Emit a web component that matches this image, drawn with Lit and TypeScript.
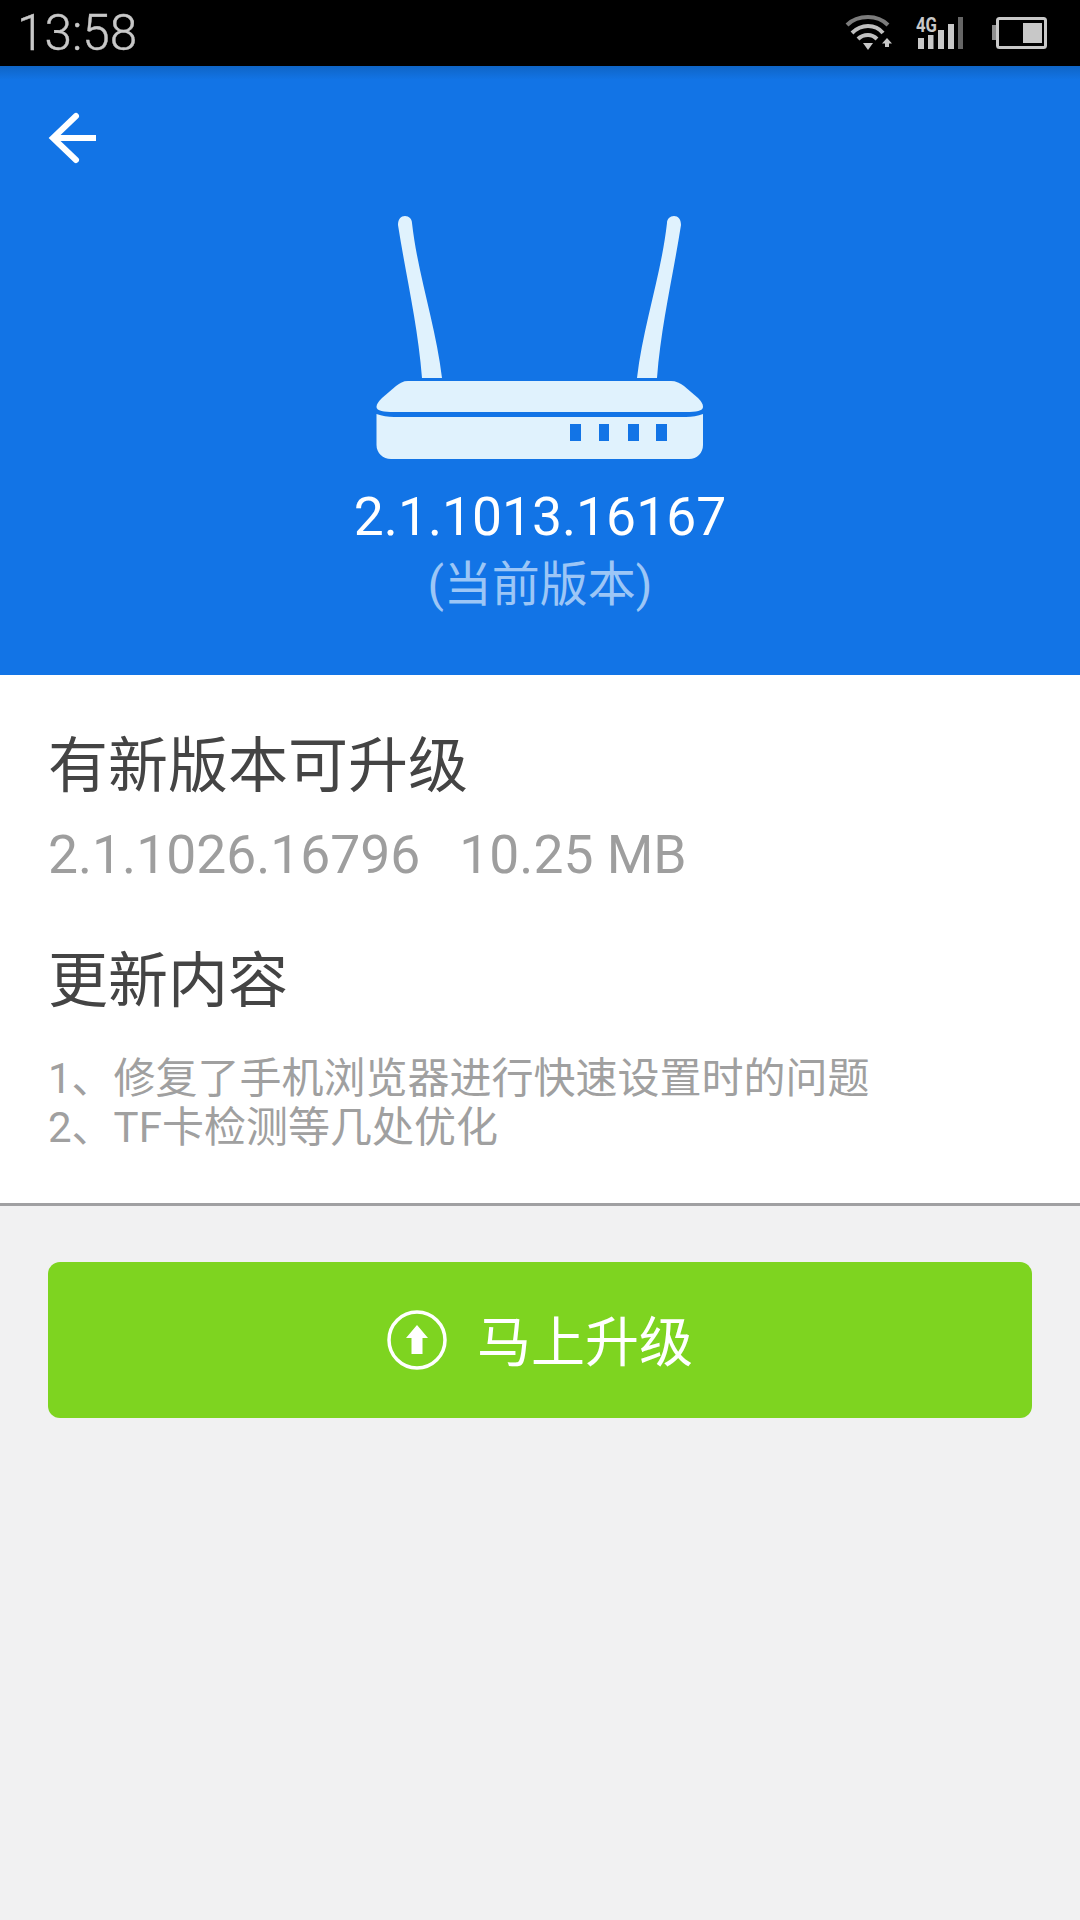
import { LitElement, html, css } from "lit";
import { customElement } from "lit/decorators.js";

@customElement("app-root")
export class AppRoot extends LitElement {
  static styles = css`
    :host {
      display: block;
      width: 1080px;
      height: 1920px;
      background: #f1f1f2;
      font-family: Roboto, "Noto Sans CJK SC", sans-serif;
      overflow: hidden;
    }
    .status {
      height: 66px;
      background: #000;
      display: flex;
      align-items: center;
      justify-content: space-between;
      padding: 0 25px 0 17px;
      box-sizing: border-box;
      color: #c8c8c8;
    }
    .time {
      font-size: 49.5px;
      font-weight: 300;
      line-height: 66px;
      -webkit-text-stroke: 0.4px #c8c8c8;
    }
    .status svg {
      display: block;
    }
    .hero {
      height: 609px;
      background: linear-gradient(#0f65c6 0, #1274e6 14px);
      display: flex;
      flex-direction: column;
      align-items: center;
      position: relative;
      box-sizing: border-box;
      padding-top: 150px;
    }
    .back {
      position: absolute;
      left: 46px;
      top: 44px;
    }
    .router {
      display: block;
    }
    .cur {
      margin-top: 26px;
      font-size: 53.4px;
      line-height: 62px;
      color: #fff;
    }
    .cur-label {
      font-size: 48px;
      line-height: 60px;
      margin-top: 7px;
      color: #9cc6f6;
    }
    .info {
      background: #fff;
      height: 531px;
      border-bottom: 3px solid #a0a0a2;
      padding: 56px 48px 0;
      box-sizing: border-box;
    }
    h2 {
      margin: 0;
      font-size: 60px;
      font-weight: 400;
      line-height: 72px;
      color: #444;
    }
    .ver {
      display: flex;
      gap: 39px;
      margin-top: 21px;
      font-size: 53.4px;
      line-height: 62px;
      color: #9e9e9e;
    }
    .changes-title {
      margin-top: 60px;
    }
    .notes {
      margin-top: 36px;
      font-size: 42px;
      line-height: 49px;
      color: #a0a0a0;
    }
    .action {
      padding: 56px 48px 0;
    }
    .btn {
      height: 156px;
      border-radius: 12px;
      background: #7ed420;
      display: flex;
      align-items: center;
      justify-content: center;
      gap: 30px;
      color: #fff;
      font-size: 54px;
    }
    .btn span {
      margin-top: -4px;
    }
  `;

  render() {
    return html`
      <div class="status">
        <span class="time">13:58</span>
        <svg width="210" height="46" viewBox="0 0 210 46">
          <g fill="none" stroke-width="4">
            <path d="M2 15 C8 9 15 7 23 7 C31 7 37 9 43 15" stroke="#7c7c7c" />
            <path d="M7 23 C12 18 17 16 23 16 C29 16 34 18 38 23" stroke="#c0c0c0" />
            <path d="M13 29 C16 26 19 25 23 25 C27 25 29 26 32 29" stroke="#c0c0c0" />
          </g>
          <path d="M18 33 H28 L23 40 Z" fill="#c8c8c8" />
          <path d="M42 28 L47 33.500 H44 V37 H40 V33.500 H37 Z" fill="#c8c8c8" />
          <text x="71" y="22" font-family="Roboto, sans-serif" font-size="20" font-weight="700" fill="#c8c8c8" textLength="21" lengthAdjust="spacingAndGlyphs">4G</text>
          <rect x="73" y="28" width="6" height="11" fill="#c8c8c8" />
          <rect x="83" y="25" width="5.500" height="14" fill="#c8c8c8" />
          <rect x="93" y="20" width="6" height="19" fill="#c8c8c8" />
          <rect x="103" y="14" width="6" height="25" fill="#c8c8c8" />
          <rect x="113" y="7" width="5" height="32" fill="#666" />
          <rect x="147" y="15" width="4" height="15" fill="#8e8e8e" />
          <rect x="152.500" y="8.500" width="48" height="29" rx="2" fill="none" stroke="#c8c8c8" stroke-width="3" />
          <rect x="178" y="13" width="19" height="20" fill="#c8c8c8" />
        </svg>
      </div>
      <div class="hero">
        <svg class="back" width="56" height="56" viewBox="0 0 56 56" fill="none" stroke="#fff" stroke-width="6">
          <path d="M50 28 H7" />
          <path d="M30 6 L7 28 L30 50" stroke-linecap="round" />
        </svg>
        <svg class="router" width="328" height="244" viewBox="0 0 328 244">
          <path fill="#e0f2fd" d="M22 9 C22 3 25 0 29 0 C33 0 36 3 36 7 C42 60 60 110 66 162 H46 C42 110 30 60 22 9 Z" />
          <path fill="#e0f2fd" d="M305 9 C305 3 302 0 298 0 C294 0 291 3 291 7 C285 60 267 110 261 162 H281 C285 110 297 60 305 9 Z" />
          <path fill="#e0f2fd" d="M32 165 H295 C300 165 304 167 308 170 L322 182 C326 186 327 189 327 191 C327 195 320 196 310 196 H18 C8 196 0.500 195 0.500 191 C0.500 189 2 186 6 182 L20 170 C24 167 27 165 32 165 Z" />
          <path fill="#e0f2fd" d="M0.500 198 C6 200 12 201 18 201 H310 C316 201 322 200 327 198 V229 C327 237 321 243 313 243 H15 C7 243 0.500 237 0.500 229 Z" />
          <rect x="194" y="208" width="11" height="17" fill="#1274e6" />
          <rect x="223" y="208" width="10" height="17" fill="#1274e6" />
          <rect x="252" y="208" width="11" height="17" fill="#1274e6" />
          <rect x="280" y="208" width="11" height="17" fill="#1274e6" />
        </svg>
        <div class="cur">2.1.1013.16167</div>
        <div class="cur-label">(当前版本)</div>
      </div>
      <div class="info">
        <h2>有新版本可升级</h2>
        <div class="ver"><span>2.1.1026.16796</span><span>10.25 MB</span></div>
        <h2 class="changes-title">更新内容</h2>
        <div class="notes">
          <div>1、修复了手机浏览器进行快速设置时的问题</div>
          <div>2、TF卡检测等几处优化</div>
        </div>
      </div>
      <div class="action">
        <div class="btn">
          <svg width="60" height="60" viewBox="0 0 60 60">
            <circle cx="30" cy="30" r="28" fill="none" stroke="#fff" stroke-width="3.500" />
            <path d="M30 15 L41 28 H35.500 V44 H24.500 V28 H19 Z" fill="#fff" />
          </svg>
          <span>马上升级</span>
        </div>
      </div>
    `;
  }
}
